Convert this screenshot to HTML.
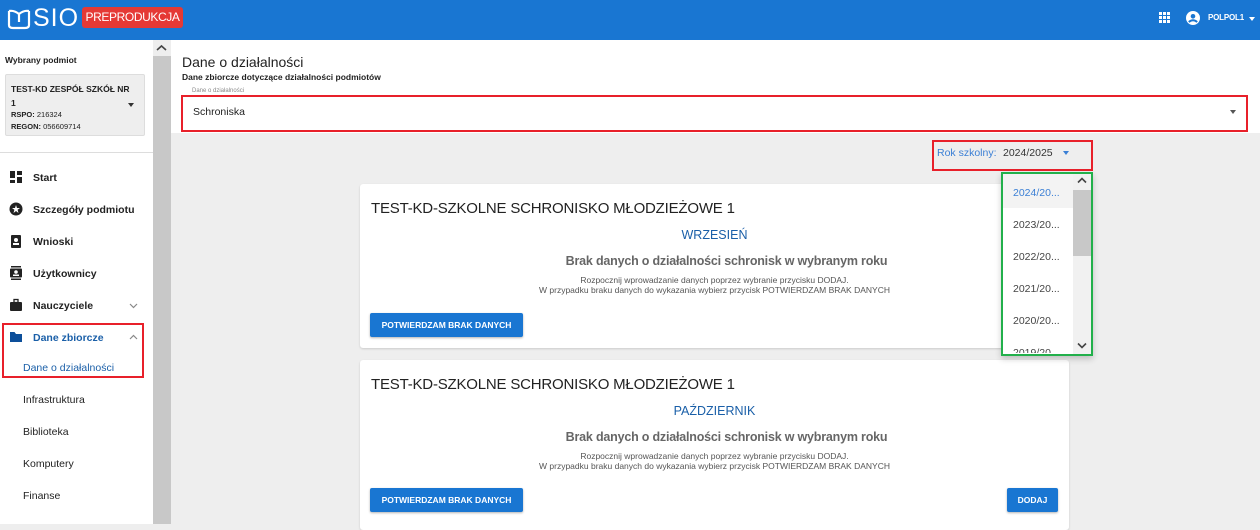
<!DOCTYPE html>
<html><head><meta charset="utf-8"><style>
*{box-sizing:border-box;margin:0;padding:0}
body{width:1260px;height:524px;overflow:hidden;font-family:"Liberation Sans",sans-serif;background:#eee;position:relative;color:#222}
.abs{position:absolute}
.hdr{left:0;top:0;width:1260px;height:40px;background:#1976d2}
.side{left:0;top:40px;width:153px;height:484px;background:#fff}
.sb{left:153px;top:56px;width:18px;height:468px;background:#c8c8c8}
.item{position:absolute;left:0;width:153px;font-size:10.5px;font-weight:bold;color:#222}
.item svg{position:absolute;left:9px;top:-2px}
.item span{position:absolute;left:33px;top:0}
.sub{position:absolute;left:23px;font-size:10.5px;color:#222}
.card{position:absolute;left:360px;width:709px;height:164px;background:#fff;border-radius:3px;box-shadow:0 1px 2px rgba(0,0,0,.15)}
.card .t{position:absolute;left:11px;top:16px;font-size:15px;color:#222;letter-spacing:-0.2px}
.card .m{position:absolute;left:0;width:709px;text-align:center;top:44px;font-size:12.5px;color:#1a5fa8}
.card .b{position:absolute;width:709px;text-align:center;left:12px;top:70px;font-size:12.5px;color:#666;font-weight:bold;letter-spacing:-0.2px}
.card .s{position:absolute;width:709px;text-align:center;left:0;top:91px;font-size:8.5px;color:#555;line-height:10px}
.btn{position:absolute;background:#1976d2;color:#fff;font-size:8.5px;font-weight:bold;border-radius:2px;box-shadow:0 1px 2px rgba(0,0,0,.3);text-align:center;line-height:24px;height:24px}
.yr{position:absolute;left:1013px;font-size:10.5px;color:#444}
</style></head><body>
<div class="abs hdr"></div>
<svg class="abs" style="left:7px;top:8px" width="24" height="22" viewBox="0 0 24 22"><path d="M2 3 L2 17 Q2 20 6 20 L18 20 Q22 20 22 17 L22 3 M2 3 Q7 2 12 6 Q17 2 22 3 M12 6 L12 14" fill="none" stroke="#fff" stroke-width="2.2"/></svg>
<div class="abs" style="left:33px;top:4px;font-size:25px;color:#fff;letter-spacing:1px">SIO</div>
<div class="abs" style="left:82px;top:7px;width:101px;height:21px;background:#e53935;border-radius:3px;color:#fff;font-size:12px;line-height:21px;text-align:center;letter-spacing:-0.4px">PREPRODUKCJA</div>
<svg class="abs" style="left:1159px;top:12px" width="11" height="11"><g fill="#fff"><rect x="0" y="0" width="3" height="3"/><rect x="4" y="0" width="3" height="3"/><rect x="8" y="0" width="3" height="3"/><rect x="0" y="4" width="3" height="3"/><rect x="4" y="4" width="3" height="3"/><rect x="8" y="4" width="3" height="3"/><rect x="0" y="8" width="3" height="3"/><rect x="4" y="8" width="3" height="3"/><rect x="8" y="8" width="3" height="3"/></g></svg>
<svg class="abs" style="left:1186px;top:11px" width="14" height="14" viewBox="0 0 14 14"><circle cx="7" cy="7" r="7" fill="#fff"/><circle cx="7" cy="5.3" r="2.3" fill="#1976d2"/><path d="M2.8 11 Q7 7.5 11.2 11" stroke="#1976d2" stroke-width="2" fill="none"/></svg>
<div class="abs" style="left:1208px;top:13px;font-size:8px;color:#fff;font-weight:bold;letter-spacing:-0.2px">POLPOL1</div>
<div class="abs" style="left:1249px;top:17px;border:3.5px solid transparent;border-top:4px solid #fff"></div>

<div class="abs side"></div>
<div class="abs sb"></div>
<svg class="abs" style="left:156px;top:44px" width="11" height="8"><path d="M1 6 L5.5 2 L10 6" fill="none" stroke="#444" stroke-width="1.6"/></svg>
<div class="abs" style="left:5px;top:55px;font-size:8.5px;font-weight:bold">Wybrany podmiot</div>
<div class="abs" style="left:5px;top:74px;width:140px;height:62px;background:#eee;border:1px solid #ddd;border-radius:2px"></div>
<div class="abs" style="left:11px;top:82px;font-size:8.5px;font-weight:bold;line-height:14px">TEST-KD ZESPÓŁ SZKÓŁ NR<br>1</div>
<div class="abs" style="left:11px;top:110px;font-size:7.5px"><b>RSPO:</b> 216324</div>
<div class="abs" style="left:11px;top:122px;font-size:7.5px"><b>REGON:</b> 056609714</div>
<div class="abs" style="left:128px;top:103px;border:3.5px solid transparent;border-top:4px solid #333"></div>
<div class="abs" style="left:0;top:152px;width:153px;height:1px;background:#ddd"></div>

<div class="item" style="top:172px"><svg width="14" height="14"><g fill="#222"><rect x="1" y="1" width="5" height="7"/><rect x="8" y="1" width="5" height="4"/><rect x="1" y="10" width="5" height="3"/><rect x="8" y="7" width="5" height="6"/></g></svg><span>Start</span></div>
<div class="item" style="top:204px"><svg width="14" height="14"><circle cx="7" cy="7" r="6.5" fill="#222"/><path d="M7 3 L8 6 L11 6 L8.6 7.8 L9.5 11 L7 9 L4.5 11 L5.4 7.8 L3 6 L6 6Z" fill="#fff"/></svg><span>Szczegóły podmiotu</span></div>
<div class="item" style="top:236px"><svg width="14" height="14"><rect x="2" y="1" width="10" height="13" rx="1" fill="#222"/><circle cx="7" cy="6" r="2" fill="#fff"/><rect x="4" y="9" width="6" height="2" fill="#fff"/></svg><span>Wnioski</span></div>
<div class="item" style="top:268px"><svg width="14" height="14"><rect x="2" y="0" width="10" height="1.5" fill="#222"/><rect x="1" y="2.5" width="12" height="9" rx="1" fill="#222"/><rect x="2" y="12.5" width="10" height="1.5" fill="#222"/><circle cx="7" cy="6" r="1.8" fill="#fff"/><rect x="4" y="8.5" width="6" height="1.5" fill="#fff"/></svg><span>Użytkownicy</span></div>
<div class="item" style="top:300px"><svg width="14" height="14"><rect x="1" y="4" width="12" height="9" rx="1" fill="#222"/><rect x="5" y="1.5" width="4" height="3" fill="none" stroke="#222" stroke-width="1.3"/></svg><span>Nauczyciele</span></div>
<svg class="abs" style="left:129px;top:303px" width="9" height="6"><path d="M1 1 L4.5 4.5 L8 1" fill="none" stroke="#888" stroke-width="1.2"/></svg>
<div class="item" style="top:332px;color:#1a5fa8"><svg width="14" height="14"><path d="M1 2 L5.5 2 L7 4 L13 4 L13 12 L1 12Z" fill="#0d4f9a"/></svg><span>Dane zbiorcze</span></div>
<svg class="abs" style="left:129px;top:334px" width="9" height="6"><path d="M1 5 L4.5 1.5 L8 5" fill="none" stroke="#888" stroke-width="1.2"/></svg>
<div class="sub" style="top:362px;color:#1a5fa8">Dane o działalności</div>
<div class="abs" style="left:2px;top:323px;width:142px;height:55px;border:2px solid #e8202a"></div>
<div class="sub" style="top:394px">Infrastruktura</div>
<div class="sub" style="top:426px">Biblioteka</div>
<div class="sub" style="top:458px">Komputery</div>
<div class="sub" style="top:490px">Finanse</div>

<div class="abs" style="left:171px;top:40px;width:1089px;height:93px;background:#fff"></div>
<div class="abs" style="left:182px;top:54px;font-size:14px;color:#222">Dane o działalności</div>
<div class="abs" style="left:182px;top:72px;font-size:8.5px;font-weight:bold">Dane zbiorcze dotyczące działalności podmiotów</div>
<div class="abs" style="left:181px;top:95px;width:1067px;height:37px;border:2.5px solid #e8202a"></div>
<div class="abs" style="left:190px;top:88px;font-size:6px;color:#888;background:#fff;padding:0 2px">Dane o działalności</div>
<div class="abs" style="left:193px;top:106px;font-size:10.5px;color:#222">Schroniska</div>
<div class="abs" style="left:1230px;top:110px;border:3.5px solid transparent;border-top:4px solid #555"></div>

<div class="abs" style="left:932px;top:140px;width:161px;height:31px;border:2px solid #e8202a"></div>
<div class="abs" style="left:937px;top:147px;font-size:10.5px;color:#3a7fd5">Rok szkolny:</div>
<div class="abs" style="left:1003px;top:147px;font-size:10.5px;color:#333">2024/2025</div>
<div class="abs" style="left:1063px;top:151px;border:3.5px solid transparent;border-top:4px solid #3a7fd5"></div>

<div class="card" style="top:184px">
<div class="t">TEST-KD-SZKOLNE SCHRONISKO MŁODZIEŻOWE 1</div>
<div class="m">WRZESIEŃ</div>
<div class="b">Brak danych o działalności schronisk w wybranym roku</div>
<div class="s">Rozpocznij wprowadzanie danych poprzez wybranie przycisku DODAJ.<br>W przypadku braku danych do wykazania wybierz przycisk POTWIERDZAM BRAK DANYCH</div>
<div class="btn" style="left:10px;top:129px;width:153px">POTWIERDZAM BRAK DANYCH</div>
</div>
<div class="card" style="top:360px;height:170px">
<div class="t">TEST-KD-SZKOLNE SCHRONISKO MŁODZIEŻOWE 1</div>
<div class="m">PAŹDZIERNIK</div>
<div class="b">Brak danych o działalności schronisk w wybranym roku</div>
<div class="s">Rozpocznij wprowadzanie danych poprzez wybranie przycisku DODAJ.<br>W przypadku braku danych do wykazania wybierz przycisk POTWIERDZAM BRAK DANYCH</div>
<div class="btn" style="left:10px;top:128px;width:153px">POTWIERDZAM BRAK DANYCH</div>
<div class="btn" style="left:647px;top:128px;width:51px">DODAJ</div>
</div>

<div class="abs" style="left:1001px;top:172px;width:92px;height:184px;background:#fff;border:2.5px solid #22b04b;overflow:hidden;box-shadow:0 3px 6px rgba(0,0,0,.2)">
<div class="abs" style="left:0;top:0;width:70px;height:34px;background:#f3f3f3"></div>
<div class="abs" style="left:70px;top:0;width:18px;height:180px;background:#f1f1f1"></div>
<div class="abs" style="left:70px;top:16px;width:18px;height:66px;background:#c8c8c8"></div>
<svg class="abs" style="left:74px;top:3px" width="10" height="7"><path d="M1 5.5 L5 1.5 L9 5.5" fill="none" stroke="#444" stroke-width="1.6"/></svg>
<svg class="abs" style="left:74px;top:168px" width="10" height="7"><path d="M1 1.5 L5 5.5 L9 1.5" fill="none" stroke="#444" stroke-width="1.6"/></svg>
</div>
<div class="yr" style="top:187px;color:#3a7fd5">2024/20...</div>
<div class="yr" style="top:219px">2023/20...</div>
<div class="yr" style="top:251px">2022/20...</div>
<div class="yr" style="top:283px">2021/20...</div>
<div class="yr" style="top:315px">2020/20...</div>
<div class="yr" style="top:347px;height:6px;overflow:hidden">2019/20...</div>
</body></html>
